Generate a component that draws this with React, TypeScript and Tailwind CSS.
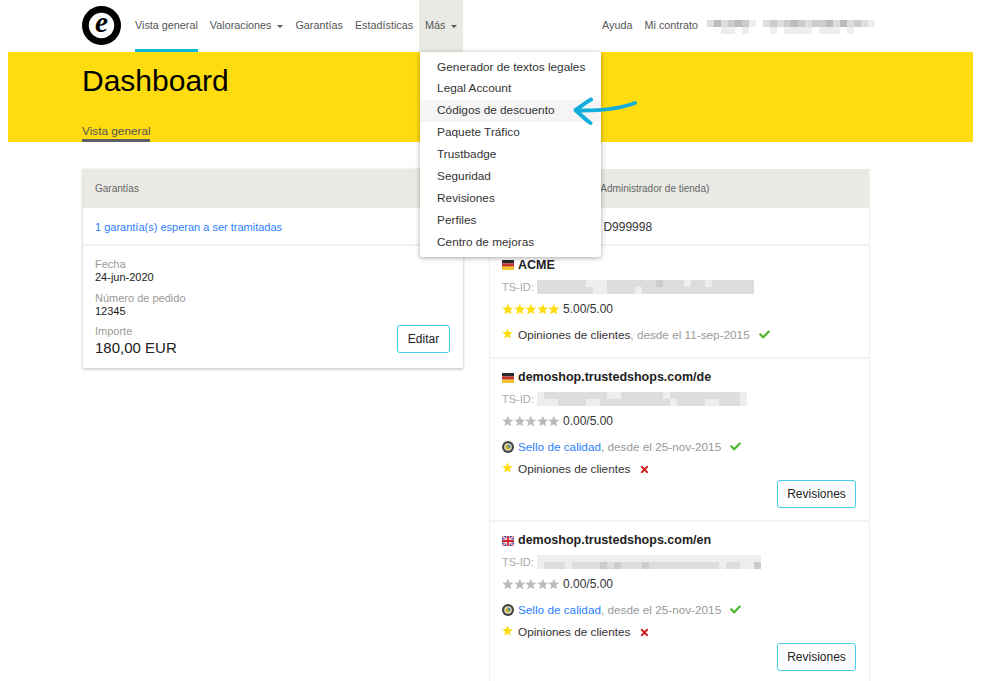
import { FaCheck, FaTimes } from 'react-icons/fa'

const menuItems = [
  'Generador de textos legales',
  'Legal Account',
  'Códigos de descuento',
  'Paquete Tráfico',
  'Trustbadge',
  'Seguridad',
  'Revisiones',
  'Perfiles',
  'Centro de mejoras',
]

// each letter is one mosaic cell, f -> #fff, d -> #ddd ...
function Mosaic({ rows, cell = 7 }: { rows: string[]; cell?: number }) {
  return (
    <div className="flex flex-col">
      {rows.map((row, i) => (
        <div key={i} className="flex">
          {row.split('').map((c, j) => (
            <div key={j} style={{ width: cell, height: cell, backgroundColor: `#${c}${c}${c}` }} />
          ))}
        </div>
      ))}
    </div>
  )
}

function Star({ color, size = 'h-[12px] w-[11.6px]' }: { color: string; size?: string }) {
  return (
    <svg viewBox="0 0 24 24" className={size} fill={color}>
      <polygon points="12,1 15.2,8.8 23.5,9.4 17.1,14.7 19.2,23 12,18.5 4.8,23 6.9,14.7 0.5,9.4 8.8,8.8" />
    </svg>
  )
}

function Stars({ color, score }: { color: string; score: string }) {
  return (
    <div className="flex h-[22px] items-center">
      <div className="flex -mt-[1px]">
        {[0, 1, 2, 3, 4].map((i) => (
          <Star key={i} color={color} />
        ))}
      </div>
      <span className="ml-[3px] text-[12px] text-[#333]">{score}</span>
    </div>
  )
}

function FlagDe() {
  return (
    <svg viewBox="0 0 12 10" className="mr-[4px] h-[10px] w-[12px] shrink-0">
      <rect width="12" height="3.4" y="0" fill="#2a2a2a" />
      <rect width="12" height="3.3" y="3.4" fill="#c8352a" />
      <rect width="12" height="3.3" y="6.7" fill="#f3c530" />
    </svg>
  )
}

function FlagUk() {
  return (
    <svg viewBox="0 0 12 10" className="mr-[4px] h-[10px] w-[12px] shrink-0">
      <rect width="12" height="10" fill="#2b3a8c" />
      <path d="M0 0L12 10M12 0L0 10" stroke="#fff" strokeWidth="2" />
      <path d="M0 0L12 10M12 0L0 10" stroke="#d3202f" strokeWidth="0.8" />
      <path d="M6 0V10M0 5H12" stroke="#fff" strokeWidth="3.2" />
      <path d="M6 0V10M0 5H12" stroke="#d3202f" strokeWidth="1.8" />
    </svg>
  )
}

function Seal() {
  return (
    <svg viewBox="0 0 12 12" className="-mt-[1px] mr-[4px] h-[12px] w-[12px] shrink-0">
      <circle cx="6" cy="6" r="6" fill="#44443f" />
      <circle cx="6" cy="6" r="3.8" fill="#e4e4d8" />
      <circle cx="6" cy="6" r="2.6" fill="#c9b22a" />
      <path d="M6 3.6A2.4 2.4 0 0 1 8.2 6.8L6 6Z" fill="#3f7fd0" />
    </svg>
  )
}

function OutlineButton({ label, width }: { label: string; width: string }) {
  return (
    <button className={`h-[28px] rounded-[3px] border border-[#43cfe8] bg-white text-[12px] text-[#222] ${width}`}>
      {label}
    </button>
  )
}

function Service({ icon, children, ok }: { icon: 'star' | 'seal'; children: React.ReactNode; ok: boolean }) {
  return (
    <div className="flex h-[22px] items-center text-[11.75px] text-[#333]">
      {icon === 'star' ? (
        <span className="-mt-[3px] mr-[5px] shrink-0">
          <Star color="#ffdc0f" size="h-[11px] w-[11px]" />
        </span>
      ) : (
        <Seal />
      )}
      <span>{children}</span>
      {ok ? (
        <FaCheck className="-mt-[1px] ml-[9px] text-[11px] text-[#4cb82a]" />
      ) : (
        <FaTimes className="ml-[9px] text-[11px] text-[#cc1f1f]" />
      )}
    </div>
  )
}

function Shop({
  flag,
  name,
  id,
  stars,
  score,
  seal,
  since,
}: {
  flag: 'de' | 'uk'
  name: string
  id: string[]
  stars: string
  score: string
  seal?: boolean
  since?: string
}) {
  return (
    <div className={`border-b-2 border-[#f2f2f0] pl-[12px] pr-[13px] pt-[8px] ${seal ? 'pb-[12px]' : 'pb-[11px]'}`}>
      <div className={`flex items-center text-[12.5px] font-bold text-[#222] ${seal ? 'h-[21px]' : 'h-[22px]'}`}>
        {flag === 'de' ? <FlagDe /> : <FlagUk />}
        {name}
      </div>
      <div className="flex h-[22px] items-center text-[11px] text-[#aaa]">
        <span className="mr-[3px]">TS-ID:</span>
        <Mosaic rows={id} />
      </div>
      <Stars color={stars} score={score} />
      <div className="mt-[4px]">
        {seal ? (
          <>
            <Service icon="seal" ok>
              <span className="text-[#2b7fff]">Sello de calidad</span>
              <span className="text-[#999]">, desde el 25-nov-2015</span>
            </Service>
            <Service icon="star" ok={false}>
              Opiniones de clientes
            </Service>
            <div className="flex justify-end">
              <OutlineButton label="Revisiones" width="w-[79px]" />
            </div>
          </>
        ) : (
          <Service icon="star" ok>
            Opiniones de clientes<span className="text-[#999]">, desde el {since}</span>
          </Service>
        )}
      </div>
    </div>
  )
}

export default function App() {
  return (
    <div className="relative h-[681px] w-[981px] overflow-hidden bg-white font-['Liberation_Sans',sans-serif]">
      <nav className="flex h-[52px] items-stretch pl-[82px] text-[10.8px] text-[#555]">
        <svg viewBox="0 0 40 40" className="mt-[6px] h-[39px] w-[39px] overflow-visible">
          <circle cx="20" cy="20" r="20" fill="#000" />
          <circle cx="20" cy="20" r="13" fill="#fff" />
          <text x="20" y="27" textAnchor="middle" fontFamily="'Liberation Serif', serif" fontStyle="italic" fontWeight="700" fontSize="30" fill="#000">
            e
          </text>
        </svg>
        <div className="ml-[14px] mr-[6px] flex items-center border-b-[3px] border-[#12b5dc] pt-[1px]">Vista general</div>
        <div className="mx-[6px] flex items-center pb-[2px]">
          Valoraciones
          <span className="ml-[6px] mt-[2px] border-x-[3.5px] border-t-[3.5px] border-x-transparent border-t-[#555]" />
        </div>
        <div className="mx-[6px] flex items-center pb-[2px]">Garantías</div>
        <div className="mx-[6px] flex items-center pb-[2px]">Estadísticas</div>
        <div className="relative flex w-[44px] items-center bg-[#eaeae5] pb-[2px] pl-[6px]">
          Más
          <span className="ml-[5px] mt-[2px] border-x-[3.5px] border-t-[3.5px] border-x-transparent border-t-[#555]" />
          <div className="absolute left-[1px] top-full z-20 w-[181px] rounded-b-[3px] bg-white pb-[3.5px] pt-[4.5px] text-[11.8px] text-[#333] shadow-[0_1px_5px_rgba(0,0,0,0.35)]">
            {menuItems.map((item) => (
              <div
                key={item}
                className={`flex h-[21.9px] items-center pl-[17px] ${item === 'Códigos de descuento' ? 'bg-[#f5f5f5]' : ''}`}
              >
                {item}
              </div>
            ))}
          </div>
        </div>
        <div className="ml-[139px] flex items-center pb-[2px]">Ayuda</div>
        <div className="ml-[12px] flex items-center pb-[2px]">Mi contrato</div>
        <div className="ml-[9px] flex items-center pb-[6px]">
          <Mosaic
            rows={[
              'ffffffffffffffffffffffff',
              'dbdcbcefdcdcbcdccbdbdcde',
              'ffeefefffefeeeefeeefefff',
            ]}
          />
        </div>
      </nav>

      <header className="mx-[8px] flex h-[90px] flex-col justify-between bg-[#ffdc0f] pl-[74px]">
        <h1 className="mt-[11px] text-[30px] leading-[36px] text-black">Dashboard</h1>
        <div className="w-[68px] whitespace-nowrap border-b-[3px] border-[#5f5f6a] pb-[1px] text-[11.8px] leading-[14px] text-[#555]">
          Vista general
        </div>
      </header>

      <main className="ml-[83px] mt-[27px] grid grid-cols-[380px_381px] items-start gap-x-[26px]">
        <section className="bg-white shadow-[0_1px_3px_rgba(0,0,0,0.28)]">
          <div className="flex h-[39px] items-center bg-[#eaeae5] px-[12px] text-[10px] text-[#666]">Garantías</div>
          <div className="flex h-[38px] items-center border-b-2 border-[#f2f2f0] px-[12px] pt-[2px] text-[11px] text-[#2b7fff]">
            1 garantía(s) esperan a ser tramitadas
          </div>
          <div className="flex items-end justify-between px-[12px] pb-[11px] pt-[12px] text-[11px] leading-[13px]">
            <div>
              <div className="text-[#999]">Fecha</div>
              <div className="text-[#222]">24-jun-2020</div>
              <div className="mt-[8px] text-[#999]">Número de pedido</div>
              <div className="text-[#222]">12345</div>
              <div className="mt-[7px] text-[#999]">Importe</div>
              <div className="mt-[1px] text-[15px] leading-[18px] text-[#222]">180,00 EUR</div>
            </div>
            <div className="mb-[4px] mr-[1px]">
              <OutlineButton label="Editar" width="w-[53px]" />
            </div>
          </div>
        </section>

        <section className="border-x border-[#f0f0ee] bg-white">
          <div className="flex h-[39px] items-center bg-[#eaeae5] px-[12px] text-[10px] text-[#666]">
            <span className="whitespace-pre">Datos de mi contrato (Administrador de tienda)</span>
          </div>
          <div className="flex h-[38px] items-center border-b-2 border-[#f2f2f0] px-[12px] pt-[2px] text-[12px] text-[#333]">
            Número de cliente <span className="ml-[4px]">D999998</span>
          </div>
          <Shop
            flag="de"
            name="ACME"
            stars="#ffdc0f"
            score="5.00/5.00"
            since="11-sep-2015"
            id={[
              'dddddddeeedddddddcdddeddedddddd',
              'ddddddddeeddddedddddddddddddddd',
            ]}
          />
          <Shop
            flag="de"
            name="demoshop.trustedshops.com/de"
            stars="#bbbbbb"
            score="0.00/5.00"
            seal
            id={[
              'edddddddddeeddddddedddddddddde',
              'eeeddddeeddddddddddeddddeeddde',
            ]}
          />
          <Shop
            flag="uk"
            name="demoshop.trustedshops.com/en"
            stars="#bbbbbb"
            score="0.00/5.00"
            seal
            id={[
              'eeeeeeeeeeeeeeeeeeeeeeeeeeeeeeee',
              'edddeddddcdcdddcddddddddddeddeec',
            ]}
          />
        </section>
      </main>

      <svg viewBox="0 0 70 32" className="pointer-events-none absolute left-[572px] top-[97px] z-30 h-[32px] w-[70px]" fill="none" stroke="#12aedb" strokeWidth="4" strokeLinecap="round" strokeLinejoin="round">
        <path d="M63 6C50 11 28 14 4 13.5" />
        <path d="M19 2.5C13 6 8 10 3.5 13C8 17 13 22 18.5 26" />
      </svg>
    </div>
  )
}
